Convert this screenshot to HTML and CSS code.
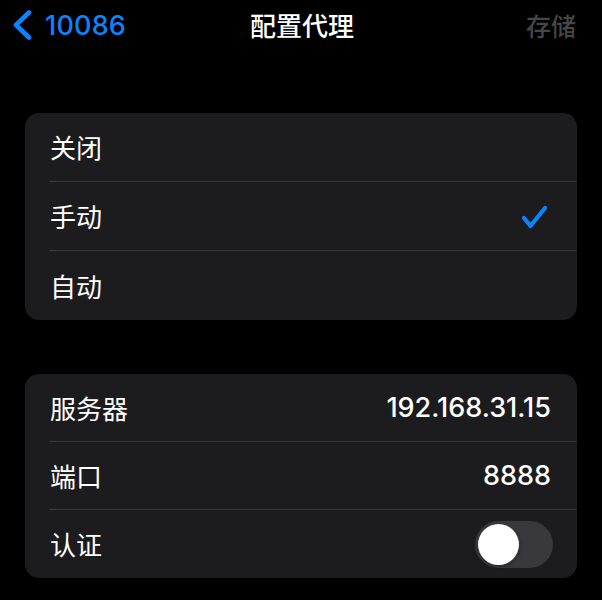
FILE: index.html
```html
<!DOCTYPE html>
<html lang="zh">
<head>
<meta charset="utf-8">
<link rel="stylesheet" href="styles.css">
</head>
<body>
<div class="nav">
  <div class="back">
    <svg class="chev" width="20" height="30" viewBox="0 0 20 30"><path d="M17 2.5 L4 15 L17 27.5" fill="none" stroke="#0a84ff" stroke-width="4.6" stroke-linecap="round" stroke-linejoin="round"/></svg>
    <span class="back-text">10086</span>
  </div>
  <div class="title">配置代理</div>
  <div class="save">存储</div>
</div>

<div class="card first">
  <div class="row"><span class="label">关闭</span></div>
  <div class="row"><span class="label">手动</span>
    <svg class="check" width="28" height="26" viewBox="0 0 28 26"><path d="M4 14 L10.5 22 L25 4" fill="none" stroke="#0a84ff" stroke-width="4.2" stroke-linecap="round" stroke-linejoin="round"/></svg>
  </div>
  <div class="row"><span class="label">自动</span></div>
</div>

<div class="card second">
  <div class="row"><span class="label">服务器</span><span class="value">192.168.31.15</span></div>
  <div class="row"><span class="label">端口</span><span class="value">8888</span></div>
  <div class="row"><span class="label">认证</span><span class="toggle"><span class="knob"></span></span></div>
</div>
</body>
</html>
```

FILE: styles.css
```css
html, body {
  margin: 0;
  padding: 0;
  background: #000;
  font-family: "Inter", "Noto Sans CJK SC", sans-serif;
  color: #fff;
}
body {
  width: 602px;
  height: 600px;
  overflow: hidden;
}
.nav {
  display: grid;
  grid-template-columns: 1fr auto 1fr;
  align-items: center;
  height: 50px;
  padding: 0 26px;
}
.back {
  display: flex;
  align-items: center;
  gap: 13px;
  margin-left: -14px;
  color: #0a84ff;
}
.chev {
  display: block;
}
.back-text {
  font-size: 27px;
  font-weight: 500;
  line-height: 1;
  letter-spacing: 0.2px;
}
.title {
  font-family: "Noto Sans CJK SC", sans-serif;
  font-size: 26px;
  font-weight: 500;
  line-height: 1;
  padding-left: 2px;
}
.save {
  justify-self: end;
  font-family: "Noto Sans CJK SC", sans-serif;
  font-size: 25px;
  font-weight: 500;
  color: #464648;
  line-height: 1;
}
.card {
  margin: 0 25px;
  background: #1c1c1e;
  border-radius: 14px;
  overflow: hidden;
}
.card.first {
  margin-top: 63px;
}
.card.second {
  margin-top: 54px;
}
.row {
  box-sizing: border-box;
  display: flex;
  align-items: center;
  justify-content: space-between;
  height: 69px;
  margin-left: 24px;
  padding-left: 1px;
  padding-right: 26px;
  border-bottom: 1px solid #38383a;
}
.second .row {
  height: 68px;
}
.row:last-child {
  border-bottom: none;
}
.label {
  font-family: "Noto Sans CJK SC", sans-serif;
  font-size: 26px;
  line-height: 1;
}
.value {
  font-size: 27px;
  font-weight: 500;
  line-height: 1;
}
.check {
  display: block;
  margin-right: 3px;
  margin-top: 1px;
}
.toggle {
  position: relative;
  display: block;
  width: 78px;
  height: 47px;
  border-radius: 24px;
  background: #39393d;
  margin-right: -2px;
}
.knob {
  position: absolute;
  left: 3px;
  top: 3px;
  width: 41px;
  height: 41px;
  border-radius: 50%;
  background: #fff;
  box-shadow: 0 2px 5px rgba(0,0,0,0.3);
}
```
